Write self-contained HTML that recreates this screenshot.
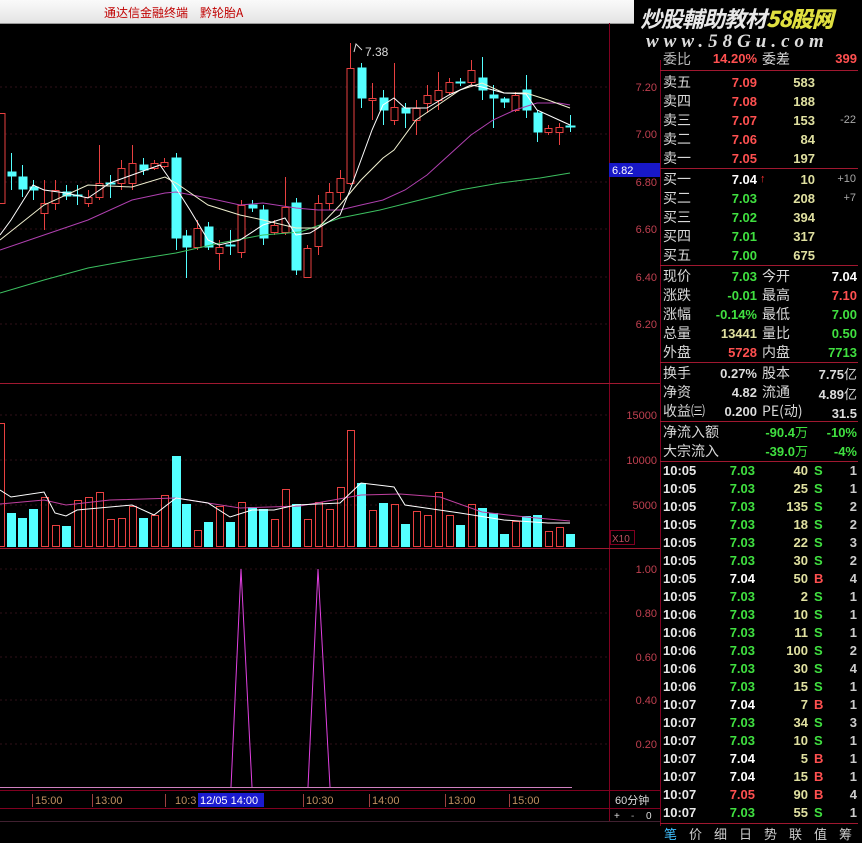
<!DOCTYPE html>
<html><head><meta charset="utf-8"><style>
body{margin:0;width:862px;height:841px;background:#000;overflow:hidden;font-family:"Liberation Sans","Noto Sans CJK SC",sans-serif;position:relative}
.top{position:absolute;left:0;top:0;width:634px;height:23px;background:linear-gradient(#fafafa,#e4e4e4);border-bottom:1px solid #999}
.top span{position:absolute;left:104px;top:4px;font-size:12px;color:#c00000;font-family:"Noto Sans CJK SC",sans-serif}
.wm1{position:absolute;left:640px;top:2px;font-size:22px;font-style:italic;color:#e8e8e8;font-family:"Noto Sans CJK SC",sans-serif;font-weight:bold;white-space:nowrap;letter-spacing:-1px}
.wm1 b{color:#e0e040}
.wm2{position:absolute;left:646px;top:31px;font-size:19px;font-style:italic;color:#ddd;font-family:"Liberation Serif",serif;letter-spacing:5px;white-space:nowrap;font-weight:bold}
.r{position:absolute;font-size:14px;line-height:18px;white-space:nowrap}
.l{color:#d8d8d8;font-family:"Noto Sans CJK SC",sans-serif}
.n{font-weight:bold;font-size:13px;text-align:right}
.red{color:#ff5050}.grn{color:#40e040}.yel{color:#e0e0a0}.wht{color:#fff}
</style></head><body>
<div class="top"><span>通达信金融终端　黔轮胎A</span></div>
<svg width="862" height="841" style="position:absolute;left:0;top:0">
<g stroke="#800020" stroke-width="1" fill="none">
<line x1="609.5" y1="23" x2="609.5" y2="822"/>
<line x1="660.5" y1="60" x2="660.5" y2="826"/>
<line x1="0" y1="383.5" x2="660" y2="383.5" stroke="#a01830"/>
<line x1="0" y1="548.5" x2="660" y2="548.5" stroke="#a01830"/>
<line x1="0" y1="790.5" x2="660" y2="790.5"/>
<line x1="0" y1="808.5" x2="660" y2="808.5"/>
<line x1="0" y1="821.5" x2="660" y2="821.5" stroke="#402030"/>
<line x1="660" y1="70.5" x2="858" y2="70.5" stroke="#a01830"/>
<line x1="660" y1="168.5" x2="858" y2="168.5" stroke="#a01830"/>
<line x1="660" y1="265.5" x2="858" y2="265.5" stroke="#a01830"/>
<line x1="660" y1="362.5" x2="858" y2="362.5" stroke="#a01830"/>
<line x1="660" y1="421.5" x2="858" y2="421.5" stroke="#a01830"/>
<line x1="660" y1="461.5" x2="858" y2="461.5" stroke="#a01830"/>
<line x1="660" y1="823.5" x2="858" y2="823.5" stroke="#a01830"/>
<rect x="610.5" y="530.5" width="24" height="14"/>
</g>
<g stroke="#301018" stroke-dasharray="2,3">
<line x1="0" y1="87" x2="608" y2="87"/><line x1="0" y1="134" x2="608" y2="134"/><line x1="0" y1="182" x2="608" y2="182"/><line x1="0" y1="229" x2="608" y2="229"/><line x1="0" y1="277" x2="608" y2="277"/><line x1="0" y1="324" x2="608" y2="324"/>
<line x1="0" y1="415" x2="608" y2="415"/><line x1="0" y1="460" x2="608" y2="460"/><line x1="0" y1="505" x2="608" y2="505"/>
<line x1="0" y1="569" x2="608" y2="569"/><line x1="0" y1="613" x2="608" y2="613"/><line x1="0" y1="657" x2="608" y2="657"/><line x1="0" y1="700" x2="608" y2="700"/><line x1="0" y1="744" x2="608" y2="744"/>
</g>
<!-- candles -->
<g stroke="#e84040" fill="#000" stroke-width="1">
<line x1="2" y1="113" x2="2" y2="203"/><rect x="-2" y="113.5" width="7" height="90"/>
<line x1="44.5" y1="180" x2="44.5" y2="230"/><rect x="41" y="203.5" width="7" height="10"/>
<line x1="55.5" y1="180" x2="55.5" y2="210"/><rect x="52" y="190.5" width="7" height="13"/>
<line x1="88.5" y1="190" x2="88.5" y2="207"/><rect x="85" y="197.5" width="7" height="6"/>
<line x1="99.5" y1="145" x2="99.5" y2="200"/><rect x="96" y="183.5" width="7" height="14"/>
<line x1="121.5" y1="160" x2="121.5" y2="190"/><rect x="118" y="168.5" width="7" height="15"/>
<line x1="132.5" y1="145" x2="132.5" y2="190"/><rect x="129" y="163.5" width="7" height="20"/>
<line x1="154.5" y1="160" x2="154.5" y2="170"/><rect x="151" y="163.5" width="7" height="5"/>
<line x1="164.5" y1="158" x2="164.5" y2="168"/><rect x="161" y="162.5" width="7" height="4"/>
<line x1="197.5" y1="220" x2="197.5" y2="250"/><rect x="194" y="228.5" width="7" height="19"/>
<line x1="219.5" y1="240" x2="219.5" y2="270"/><rect x="216" y="247.5" width="7" height="6"/>
<line x1="241.5" y1="200" x2="241.5" y2="258"/><rect x="238" y="205.5" width="7" height="47"/>
<line x1="274.5" y1="220" x2="274.5" y2="235"/><rect x="271" y="225.5" width="7" height="7"/>
<line x1="285.5" y1="177" x2="285.5" y2="235"/><rect x="282" y="207.5" width="7" height="25"/>
<line x1="307.5" y1="245" x2="307.5" y2="278"/><rect x="304" y="248.5" width="7" height="29"/>
<line x1="318.5" y1="195" x2="318.5" y2="255"/><rect x="315" y="203.5" width="7" height="43"/>
<line x1="329.5" y1="183" x2="329.5" y2="210"/><rect x="326" y="192.5" width="7" height="11"/>
<line x1="340.5" y1="170" x2="340.5" y2="200"/><rect x="337" y="178.5" width="7" height="14"/>
<line x1="350.5" y1="43" x2="350.5" y2="185"/><rect x="347" y="68.5" width="7" height="115"/>
<line x1="372.5" y1="83" x2="372.5" y2="120"/><rect x="369" y="98.5" width="7" height="2"/>
<line x1="394.5" y1="63" x2="394.5" y2="125"/><rect x="391" y="107.5" width="7" height="13"/>
<line x1="416.5" y1="100" x2="416.5" y2="135"/><rect x="413" y="108.5" width="7" height="12"/>
<line x1="427.5" y1="85" x2="427.5" y2="113"/><rect x="424" y="95.5" width="7" height="8"/>
<line x1="438.5" y1="72" x2="438.5" y2="110"/><rect x="435" y="90.5" width="7" height="10"/>
<line x1="449.5" y1="78" x2="449.5" y2="95"/><rect x="446" y="82.5" width="7" height="10"/>
<line x1="471.5" y1="60" x2="471.5" y2="85"/><rect x="468" y="70.5" width="7" height="12"/>
<line x1="515.5" y1="92" x2="515.5" y2="112"/><rect x="512" y="95.5" width="7" height="15"/>
<line x1="548.5" y1="125" x2="548.5" y2="135"/><rect x="545" y="128.5" width="7" height="4"/>
<line x1="559.5" y1="123" x2="559.5" y2="145"/><rect x="556" y="127.5" width="7" height="5"/>
</g>
<g stroke="#54ffff" fill="#54ffff">
<line x1="11.5" y1="153" x2="11.5" y2="190"/><rect x="8" y="172" width="8" height="4"/>
<line x1="22.5" y1="165" x2="22.5" y2="197"/><rect x="19" y="177" width="8" height="12"/>
<line x1="33.5" y1="180" x2="33.5" y2="200"/><rect x="30" y="187" width="8" height="3"/>
<line x1="66.5" y1="185" x2="66.5" y2="200"/><rect x="63" y="192" width="8" height="4"/>
<line x1="77.5" y1="185" x2="77.5" y2="205"/><rect x="73" y="195" width="9" height="1"/>
<line x1="110.5" y1="175" x2="110.5" y2="198"/><rect x="106" y="183" width="9" height="1"/>
<line x1="143.5" y1="158" x2="143.5" y2="175"/><rect x="140" y="165" width="8" height="5"/>
<line x1="176.5" y1="153" x2="176.5" y2="250"/><rect x="172" y="158" width="9" height="80"/>
<line x1="186.5" y1="230" x2="186.5" y2="278"/><rect x="183" y="236" width="8" height="11"/>
<line x1="208.5" y1="222" x2="208.5" y2="250"/><rect x="205" y="227" width="8" height="20"/>
<line x1="230.5" y1="230" x2="230.5" y2="255"/><rect x="226" y="245" width="9" height="1"/>
<line x1="252.5" y1="200" x2="252.5" y2="212"/><rect x="249" y="205" width="8" height="3"/>
<line x1="263.5" y1="205" x2="263.5" y2="245"/><rect x="260" y="210" width="8" height="28"/>
<line x1="296.5" y1="198" x2="296.5" y2="275"/><rect x="292" y="203" width="9" height="67"/>
<line x1="361.5" y1="63" x2="361.5" y2="108"/><rect x="358" y="68" width="8" height="30"/>
<line x1="383.5" y1="90" x2="383.5" y2="125"/><rect x="380" y="98" width="8" height="12"/>
<line x1="405.5" y1="103" x2="405.5" y2="128"/><rect x="402" y="108" width="8" height="5"/>
<line x1="460.5" y1="78" x2="460.5" y2="86"/><rect x="456" y="82" width="9" height="1"/>
<line x1="482.5" y1="57" x2="482.5" y2="100"/><rect x="479" y="78" width="8" height="12"/>
<line x1="493.5" y1="85" x2="493.5" y2="128"/><rect x="490" y="95" width="8" height="3"/>
<line x1="504.5" y1="97" x2="504.5" y2="108"/><rect x="501" y="99" width="8" height="3"/>
<line x1="526.5" y1="75" x2="526.5" y2="118"/><rect x="523" y="90" width="8" height="20"/>
<line x1="537.5" y1="110" x2="537.5" y2="142"/><rect x="534" y="113" width="8" height="19"/>
<line x1="570.5" y1="115" x2="570.5" y2="132"/><rect x="566" y="126" width="9" height="1"/>
</g>
<g fill="none" stroke-width="1">
<polyline stroke="#3cc060" points="0,293 44,280 88,268 132,260 176,253 220,243 263,235 300,232 340,218 380,210 420,200 460,190 500,183 540,178 570,173"/>
<polyline stroke="#b040b0" points="0,250 44,235 88,220 132,200 165,193 176,192 208,198 240,205 263,203 296,208 318,210 340,210 361,205 383,200 405,190 427,175 449,155 471,135 493,120 515,110 537,103 559,103 570,105"/>
<polyline stroke="#f0f0d0" points="0,240 44,205 88,185 132,187 165,177 176,183 208,205 240,215 263,220 296,228 318,228 340,205 361,180 383,158 394,150 416,120 438,105 460,90 482,83 504,93 526,93 548,100 570,108"/>
<polyline stroke="#ffffff" points="0,235 11,220 33,185 44,190 66,193 88,198 110,183 132,175 160,165 176,188 190,210 208,240 219,245 240,240 263,225 285,218 296,235 310,233 340,215 350,190 361,160 372,130 383,105 394,98 405,108 427,108 449,95 471,85 482,87 504,93 526,94 537,110 559,120 570,125"/>
<polyline stroke="#ddd" points="354,52 356,44 362,50"/>
</g>
<text x="365" y="56" fill="#ddd" font-size="12" font-family="Liberation Sans">7.38</text>
<!-- volume -->
<g stroke="#e84040" fill="none">
<rect x="-2.5" y="423.5" width="7" height="123"/>
<rect x="41.5" y="497.5" width="7" height="49"/>
<rect x="52.5" y="525.5" width="7" height="21"/>
<rect x="74.5" y="500.5" width="7" height="46"/>
<rect x="85.5" y="497.5" width="7" height="49"/>
<rect x="96.5" y="492.5" width="7" height="54"/>
<rect x="107.5" y="519.5" width="7" height="27"/>
<rect x="118.5" y="518.5" width="7" height="28"/>
<rect x="129.5" y="506.5" width="7" height="40"/>
<rect x="151.5" y="515.5" width="7" height="31"/>
<rect x="161.5" y="495.5" width="7" height="51"/>
<rect x="194.5" y="530.5" width="7" height="16"/>
<rect x="216.5" y="506.5" width="7" height="40"/>
<rect x="238.5" y="502.5" width="7" height="44"/>
<rect x="271.5" y="519.5" width="7" height="27"/>
<rect x="282.5" y="489.5" width="7" height="57"/>
<rect x="304.5" y="519.5" width="7" height="27"/>
<rect x="315.5" y="502.5" width="7" height="44"/>
<rect x="326.5" y="509.5" width="7" height="37"/>
<rect x="337.5" y="487.5" width="7" height="59"/>
<rect x="347.5" y="430.5" width="7" height="116"/>
<rect x="369.5" y="510.5" width="7" height="36"/>
<rect x="391.5" y="504.5" width="7" height="42"/>
<rect x="413.5" y="511.5" width="7" height="35"/>
<rect x="424.5" y="515.5" width="7" height="31"/>
<rect x="435.5" y="492.5" width="7" height="54"/>
<rect x="446.5" y="515.5" width="7" height="31"/>
<rect x="468.5" y="504.5" width="7" height="42"/>
<rect x="512.5" y="521.5" width="7" height="25"/>
<rect x="545.5" y="531.5" width="7" height="15"/>
<rect x="556.5" y="527.5" width="7" height="19"/>
</g>
<g fill="#54ffff">
<rect x="7" y="513" width="9" height="34"/><rect x="18" y="518" width="9" height="29"/><rect x="29" y="509" width="9" height="38"/>
<rect x="62" y="526" width="9" height="21"/><rect x="139" y="518" width="9" height="29"/><rect x="172" y="456" width="9" height="91"/>
<rect x="182" y="504" width="9" height="43"/><rect x="204" y="522" width="9" height="25"/><rect x="226" y="522" width="9" height="25"/>
<rect x="248" y="507" width="9" height="40"/><rect x="259" y="509" width="9" height="38"/><rect x="292" y="504" width="9" height="43"/>
<rect x="357" y="483" width="9" height="64"/><rect x="379" y="503" width="9" height="44"/><rect x="401" y="524" width="9" height="23"/>
<rect x="456" y="525" width="9" height="22"/><rect x="478" y="508" width="9" height="39"/><rect x="489" y="513" width="9" height="34"/>
<rect x="500" y="534" width="9" height="13"/><rect x="522" y="516" width="9" height="31"/><rect x="533" y="515" width="9" height="32"/>
<rect x="566" y="534" width="9" height="13"/>
</g>
<g fill="none">
<polyline stroke="#c040a0" points="0,504 44,500 66,505 110,500 176,498 240,508 300,506 361,495 400,494 440,497 482,512 526,517 570,521"/>
<polyline stroke="#fff" points="0,490 11,497 44,492 55,513 66,516 77,510 132,505 154,515 176,498 208,503 230,517 252,510 274,510 296,505 340,503 361,483 394,487 405,505 460,513 504,520 548,523 570,523"/>
</g>
<!-- indicator -->
<line x1="0" y1="787.5" x2="572" y2="787.5" stroke="#d080c0"/>
<polyline fill="none" stroke="#e040e0" points="231,787 241,569 252,787"/>
<polyline fill="none" stroke="#e040e0" points="308,787 318,569 330,787"/>
<!-- axis labels -->
<g fill="#c04050" font-size="11" font-family="Liberation Sans" text-anchor="end">
<text x="657" y="91">7.20</text><text x="657" y="138">7.00</text><text x="657" y="186">6.80</text><text x="657" y="233">6.60</text><text x="657" y="281">6.40</text><text x="657" y="328">6.20</text>
<text x="657" y="419">15000</text><text x="657" y="464">10000</text><text x="657" y="509">5000</text>
<text x="657" y="573">1.00</text><text x="657" y="617">0.80</text><text x="657" y="661">0.60</text><text x="657" y="704">0.40</text><text x="657" y="748">0.20</text>
</g>
<text x="612" y="542" fill="#c05060" font-size="10" font-family="Liberation Sans">X10</text>
<rect x="609" y="163" width="51" height="14" fill="#1818c8"/>
<text x="612" y="174" fill="#fff" font-size="11" font-family="Liberation Sans">6.82</text>
<g fill="#c09060" font-size="11" font-family="Liberation Sans">
<text x="35" y="804">15:00</text><text x="95" y="804">13:00</text><text x="175" y="804">10:3</text><text x="306" y="804">10:30</text><text x="372" y="804">14:00</text><text x="448" y="804">13:00</text><text x="512" y="804">15:00</text>
</g>
<g stroke="#a04040"><line x1="32.5" y1="794" x2="32.5" y2="807"/><line x1="92.5" y1="794" x2="92.5" y2="807"/><line x1="165.5" y1="794" x2="165.5" y2="807"/><line x1="303.5" y1="794" x2="303.5" y2="807"/><line x1="369.5" y1="794" x2="369.5" y2="807"/><line x1="445.5" y1="794" x2="445.5" y2="807"/><line x1="509.5" y1="794" x2="509.5" y2="807"/></g>
<rect x="198" y="793" width="66" height="14" fill="#1a1ad0"/>
<text x="200" y="804" fill="#fff" font-size="11" font-family="Liberation Sans">12/05 14:00</text>
<text x="615" y="804" fill="#ddd" font-size="11" font-family="Liberation Sans,Noto Sans CJK SC">60分钟</text>
<text x="614" y="819" fill="#ddd" font-size="10" font-family="Liberation Sans">+</text><text x="631" y="819" fill="#aaa" font-size="10">-</text><text x="646" y="819" fill="#ddd" font-size="10" font-family="Liberation Sans">0</text>
</svg>
<div class="wm1">炒股輔助教材<b>58股网</b></div>
<div class="wm2">www.58Gu.com</div>
<div class="r l" style="left:663px;top:50px;color:#bbb">委比</div><div class="r n red" style="left:700px;top:50px;width:57px">14.20%</div><div class="r l" style="left:762px;top:50px">委差</div><div class="r n red" style="left:800px;top:50px;width:57px">399</div>
<div id="ob"></div>
<div class="r l" style="left:663px;top:73px;line-height:19px">卖五<br>卖四<br>卖三<br>卖二<br>卖一</div>
<div class="r n red" style="left:700px;top:73px;width:57px;line-height:19px">7.09<br>7.08<br>7.07<br>7.06<br>7.05</div>
<div class="r n yel" style="left:770px;top:73px;width:45px;line-height:19px">583<br>188<br>153<br>84<br>197</div>
<div class="r" style="left:820px;top:111px;width:36px;text-align:right;font-size:11px;color:#aaa">-22</div>
<div class="r l" style="left:663px;top:170px;line-height:19px">买一<br>买二<br>买三<br>买四<br>买五</div>
<div class="r n grn" style="left:700px;top:170px;width:57px;line-height:19px"><span class="wht">7.04</span><br>7.03<br>7.02<br>7.01<br>7.00</div>
<div class="r" style="left:760px;top:170px;color:#ff3030;font-size:11px">↑</div>
<div class="r n yel" style="left:770px;top:170px;width:45px;line-height:19px">10<br>208<br>394<br>317<br>675</div>
<div class="r" style="left:820px;top:170px;width:36px;text-align:right;font-size:11px;color:#aaa;line-height:19px">+10<br>+7</div>
<div class="r l" style="left:663px;top:267px;line-height:19px">现价<br>涨跌<br>涨幅<br>总量<br>外盘</div>
<div class="r n" style="left:690px;top:267px;width:67px;line-height:19px"><span class="grn">7.03</span><br><span class="grn">-0.01</span><br><span class="grn">-0.14%</span><br><span class="yel">13441</span><br><span class="red">5728</span></div>
<div class="r l" style="left:762px;top:267px;line-height:19px">今开<br>最高<br>最低<br>量比<br>内盘</div>
<div class="r n" style="left:800px;top:267px;width:57px;line-height:19px"><span class="wht">7.04</span><br><span class="red">7.10</span><br><span class="grn">7.00</span><br><span class="grn">0.50</span><br><span class="grn">7713</span></div>
<div class="r l" style="left:663px;top:364px;line-height:19px">换手<br>净资<br>收益㈢</div>
<div class="r n" style="left:690px;top:364px;width:67px;line-height:19px;color:#ddd">0.27%<br>4.82<br>0.200</div>
<div class="r l" style="left:762px;top:364px;line-height:19px">股本<br>流通<br>PE(动)</div>
<div class="r n" style="left:790px;top:364px;width:67px;line-height:19px;color:#ddd">7.75<span class="l" style="font-weight:normal">亿</span><br>4.89<span class="l" style="font-weight:normal">亿</span><br>31.5</div>
<div class="r l" style="left:663px;top:423px;line-height:19px">净流入额<br>大宗流入</div>
<div class="r n grn" style="left:740px;top:423px;width:68px;line-height:19px">-90.4<span style="font-weight:normal">万</span><br>-39.0<span style="font-weight:normal">万</span></div>
<div class="r n grn" style="left:812px;top:423px;width:45px;line-height:19px">-10%<br>-4%</div>
<div class="r n" style="left:663px;top:462px;width:45px;text-align:left;line-height:18px;color:#e8e8e8">10:05<br>10:05<br>10:05<br>10:05<br>10:05<br>10:05<br>10:05<br>10:05<br>10:06<br>10:06<br>10:06<br>10:06<br>10:06<br>10:07<br>10:07<br>10:07<br>10:07<br>10:07<br>10:07<br>10:07</div>
<div class="r n grn" style="left:715px;top:462px;width:40px;line-height:18px">7.03<br>7.03<br>7.03<br>7.03<br>7.03<br>7.03<br><span class="wht">7.04</span><br>7.03<br>7.03<br>7.03<br>7.03<br>7.03<br>7.03<br><span class="wht">7.04</span><br>7.03<br>7.03<br><span class="wht">7.04</span><br><span class="wht">7.04</span><br><span class="red">7.05</span><br>7.03</div>
<div class="r n yel" style="left:770px;top:462px;width:38px;line-height:18px">40<br>25<br>135<br>18<br>22<br>30<br>50<br>2<br>10<br>11<br>100<br>30<br>15<br>7<br>34<br>10<br>5<br>15<br>90<br>55</div>
<div class="r n grn" style="left:814px;top:462px;width:12px;text-align:left;line-height:18px">S<br>S<br>S<br>S<br>S<br>S<br><span class="red">B</span><br>S<br>S<br>S<br>S<br>S<br>S<br><span class="red">B</span><br>S<br>S<br><span class="red">B</span><br><span class="red">B</span><br><span class="red">B</span><br>S</div>
<div class="r n" style="left:840px;top:462px;width:17px;line-height:18px;color:#ccc">1<br>1<br>2<br>2<br>3<br>2<br>4<br>1<br>1<br>1<br>2<br>4<br>1<br>1<br>3<br>1<br>1<br>1<br>4<br>1</div>
<div class="r l" style="left:664px;top:825px;font-size:13px;word-spacing:0;letter-spacing:12px;color:#ccc"><span style="color:#40c0ff">笔</span>价细日势联值筹</div>
</body></html>
